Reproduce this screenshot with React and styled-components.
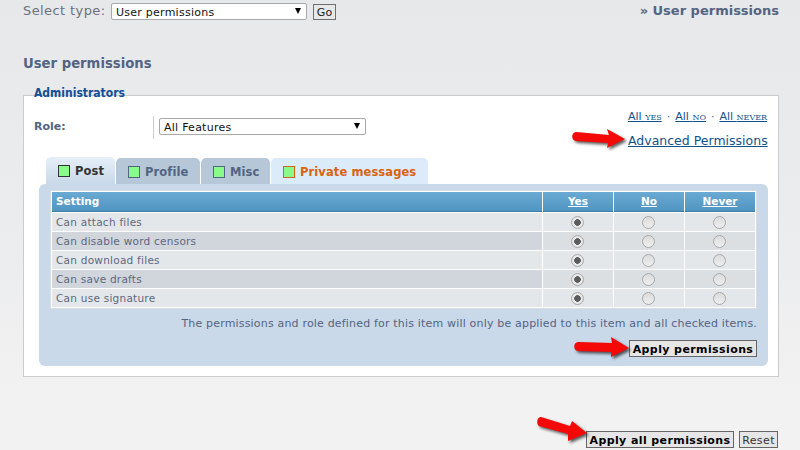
import React from "react";
import styled, { createGlobalStyle } from "styled-components";

const Global = createGlobalStyle`
  html, body { margin: 0; padding: 0; }
  body { font-family: "DejaVu Sans", Verdana, sans-serif; overflow: hidden; }
`;

const Page = styled.div`
  position: relative;
  width: 800px;
  height: 450px;
  overflow: hidden;
  box-sizing: border-box;
  padding: 3px 21px 0 23px;
  background: linear-gradient(#e7e8ea 0, #ecedee 270px, #f2f2f2 400px);
  color: #536482;
`;

const TopBar = styled.div`
  display: flex;
  align-items: flex-start;
  justify-content: space-between;
  height: 44px;
`;

const TypeForm = styled.div`
  display: flex;
  align-items: flex-start;
`;

const TypeLabel = styled.span`
  font-size: 13px;
  line-height: 15px;
  letter-spacing: 0.4px;
  width: 88px;
  color: #6b7280;
`;

const FakeSelect = styled.div`
  box-sizing: border-box;
  width: ${(p) => p.$w}px;
  height: ${(p) => p.$h}px;
  background: #fff;
  border: 1px solid #a9a9a9;
  border-radius: 2px;
  display: flex;
  align-items: center;
  justify-content: space-between;
  padding: 1px 3px 0 4px;
  font-size: 11px;
  letter-spacing: 0.25px;
  color: #111;
`;

const Caret = styled.i`
  width: 0;
  height: 0;
  border-left: 3.5px solid transparent;
  border-right: 3.5px solid transparent;
  border-top: 6px solid #000;
  margin: -2px 2px 0 0;
`;

const GoButton = styled.div`
  box-sizing: border-box;
  margin: 1px 0 0 6px;
  width: 23px;
  height: 16px;
  background: #e8e8e8;
  border: 1px solid #6f6f6f;
  font-size: 11px;
  line-height: 16px;
  text-align: center;
  color: #222;
`;

const Crumb = styled.div`
  font-size: 13px;
  font-weight: bold;
  line-height: 15px;
  color: #536482;
`;

const Heading = styled.h2`
  margin: 0 0 8px;
  height: 33px;
  padding-top: 7px;
  box-sizing: content-box;
  font-family: "DejaVu Sans Condensed", "DejaVu Sans", sans-serif;
  font-size: 14.7px;
  line-height: 17px;
  font-weight: bold;
  color: #536482;
`;

const Fieldset = styled.div`
  position: relative;
  box-sizing: border-box;
  width: 756px;
  height: 282px;
  background: #fff;
  border: 1px solid #ccc;
  padding: 0 10px 0 15px;
`;

const Legend = styled.div`
  position: absolute;
  left: 10px;
  top: -11px;
  font-family: "DejaVu Sans Condensed", "DejaVu Sans", sans-serif;
  font-size: 12px;
  line-height: 16px;
  font-weight: bold;
  color: #115098;
`;

const TopRow = styled.div`
  display: flex;
  justify-content: space-between;
  height: 61px;
`;

const RoleRow = styled.div`
  display: flex;
  align-items: flex-start;
  padding-top: 20px;
  margin-left: -5px;
`;

const RoleLabel = styled.span`
  width: 119px;
  font-size: 11px;
  line-height: 21px;
  font-weight: bold;
  color: #536482;
`;

const RoleDivider = styled.div`
  border-left: 1px solid #ccc;
  height: 21px;
  padding: 2px 0 0 5px;
`;

const LinkBlock = styled.div`
  width: 141px;
  padding-top: 14px;
  margin-right: -1px;
`;

const QuickLinks = styled.div`
  font-size: 11px;
  line-height: 13px;
  height: 23px;
  white-space: nowrap;
  color: #536482;
`;

const Link = styled.a`
  color: #105289;
  text-decoration: underline;
`;

const SmallWord = styled.span`
  font-size: 8px;
  font-family: "DejaVu Serif", serif;
  text-transform: uppercase;
`;

const Sep = styled.span`
  margin: 0 5px;
`;

const BigLink = styled.a`
  display: block;
  font-size: 12.5px;
  line-height: 15px;
  color: #105289;
  text-decoration: underline;
  white-space: nowrap;
`;

const Tabs = styled.div`
  display: flex;
  gap: 1px;
  margin-left: 7px;
  height: 27px;
`;

const Tab = styled.div`
  box-sizing: border-box;
  width: ${(p) => p.$w}px;
  height: ${(p) => (p.$active ? 27 : 26)}px;
  margin-top: ${(p) => (p.$active ? 0 : 1)}px;
  border-radius: 5px 5px 0 0;
  display: flex;
  align-items: center;
  gap: 5px;
  padding: 1px 0 0 12px;
  font-size: 11.5px;
  font-weight: bold;
  letter-spacing: 0.1px;
  background: ${(p) =>
    p.$active ? "linear-gradient(#e6eff8, #c9d9e9)" : p.$alt ? "#dcebfa" : "#b6c8d7"};
  color: ${(p) => (p.$alt ? "#d9640f" : p.$active ? "#333" : "#536482")};
`;

const Swatch = styled.i`
  box-sizing: border-box;
  width: 12px;
  height: 12px;
  background: #88fb88;
  border: 1px solid ${(p) => p.$c};
`;

const Panel = styled.div`
  box-sizing: border-box;
  width: 729px;
  height: 182px;
  background: #c9d9e9;
  border-radius: 6px;
  padding: 6px 11px 0 11px;
`;

const Table = styled.div`
  box-sizing: border-box;
  width: 707px;
  height: 119px;
  background: #fff;
  border: 1px solid #d8dde2;
  padding: 1px;
  display: grid;
  grid-template-columns: 490px 70px 70px 70px;
  column-gap: 1px;
  grid-template-rows: 20px repeat(5, 18px);
  row-gap: 1px;
`;

const HeadCell = styled.div`
  background: linear-gradient(#6aaad4, #5095c0);
  border-bottom: 1px solid #3d7fa9;
  box-sizing: border-box;
  color: #fff;
  font-size: 10.5px;
  font-weight: bold;
  line-height: 19px;
  padding-left: ${(p) => (p.$left ? "4px" : 0)};
  text-align: ${(p) => (p.$left ? "left" : "center")};
  text-decoration: ${(p) => (p.$left ? "none" : "underline")};
`;

const NameCell = styled.div`
  background: ${(p) => (p.$odd ? "#d1d5dc" : "#e4e7ea")};
  font-size: 10.5px;
  letter-spacing: 0.25px;
  line-height: 19px;
  padding-left: 4px;
  color: #5d6880;
`;

const RadioCell = styled.div`
  box-sizing: border-box;
  background: ${(p) => (p.$odd ? "#dcdfe2" : "#e4e7ea")};
  display: flex;
  align-items: center;
  justify-content: center;
  padding-right: 2px;
`;

const Radio = styled.i`
  box-sizing: border-box;
  width: 13px;
  height: 13px;
  border-radius: 50%;
  border: 1px solid #a8a8a8;
  background: ${(p) =>
    p.$on
      ? "radial-gradient(circle, #5c5c5c 0 3px, #e8e8e8 3.6px)"
      : "linear-gradient(#dcdcdc, #eeeeee)"};
`;

const Note = styled.div`
  width: 707px;
  margin-top: 8px;
  height: 23px;
  text-align: right;
  font-size: 11px;
  line-height: 13px;
  letter-spacing: 0.18px;
  white-space: nowrap;
  color: #536482;
`;

const PanelActions = styled.div`
  width: 707px;
  display: flex;
  justify-content: flex-end;
`;

const ActionBtn = styled.div`
  box-sizing: border-box;
  width: ${(p) => p.$w}px;
  height: 17px;
  background: #e6e6e6;
  border: 1px solid #666;
  font-size: 11px;
  line-height: 17px;
  font-weight: ${(p) => (p.$plain ? "normal" : "bold")};
  text-align: center;
  letter-spacing: 0.4px;
  color: ${(p) => (p.$plain ? "#333" : "#000")};
`;

const FootActions = styled.div`
  width: 755px;
  display: flex;
  justify-content: flex-end;
  gap: 5px;
  margin-top: 54px;
`;

const Arrow = styled.svg`
  position: absolute;
  left: ${(p) => p.$x}px;
  top: ${(p) => p.$y}px;
  overflow: visible;
  filter: drop-shadow(2px 2px 1.5px rgba(0, 0, 0, 0.65));
`;

function RedArrow({ x, y, d }) {
  return (
    <Arrow $x={x} $y={y} width="56" height="26" viewBox="0 0 56 26">
      <path d={d} fill="#f40808" />
    </Arrow>
  );
}

const rows = [
  "Can attach files",
  "Can disable word censors",
  "Can download files",
  "Can save drafts",
  "Can use signature",
];

export default function App() {
  return (
    <Page>
      <Global />
      <TopBar>
        <TypeForm>
          <TypeLabel>Select type:</TypeLabel>
          <FakeSelect $w={196} $h={17}>
            User permissions
            <Caret />
          </FakeSelect>
          <GoButton>Go</GoButton>
        </TypeForm>
        <Crumb>» User permissions</Crumb>
      </TopBar>
      <Heading>User permissions</Heading>
      <Fieldset>
        <Legend>Administrators</Legend>
        <TopRow>
          <RoleRow>
            <RoleLabel>Role:</RoleLabel>
            <RoleDivider>
              <FakeSelect $w={207} $h={17}>
                All Features
                <Caret />
              </FakeSelect>
            </RoleDivider>
          </RoleRow>
          <LinkBlock>
            <QuickLinks>
              <Link>
                All <SmallWord>yes</SmallWord>
              </Link>
              <Sep>·</Sep>
              <Link>
                All <SmallWord>no</SmallWord>
              </Link>
              <Sep>·</Sep>
              <Link>
                All <SmallWord>never</SmallWord>
              </Link>
            </QuickLinks>
            <BigLink>Advanced Permissions</BigLink>
          </LinkBlock>
        </TopRow>
        <Tabs>
          <Tab $w={69} $active>
            <Swatch $c="#333" />
            Post
          </Tab>
          <Tab $w={84}>
            <Swatch $c="#536482" />
            Profile
          </Tab>
          <Tab $w={69}>
            <Swatch $c="#536482" />
            Misc
          </Tab>
          <Tab $w={157} $alt>
            <Swatch $c="#d9640f" />
            Private messages
          </Tab>
        </Tabs>
        <Panel>
          <Table>
            <HeadCell $left>Setting</HeadCell>
            <HeadCell>Yes</HeadCell>
            <HeadCell>No</HeadCell>
            <HeadCell>Never</HeadCell>
            {rows.map((r, i) => (
              <React.Fragment key={r}>
                <NameCell $odd={i % 2 === 1}>{r}</NameCell>
                <RadioCell $odd={i % 2 === 1}>
                  <Radio $on />
                </RadioCell>
                <RadioCell $odd={i % 2 === 1}>
                  <Radio />
                </RadioCell>
                <RadioCell $odd={i % 2 === 1}>
                  <Radio />
                </RadioCell>
              </React.Fragment>
            ))}
          </Table>
          <Note>
            The permissions and role defined for this item will only be applied to this item and
            all checked items.
          </Note>
          <PanelActions>
            <ActionBtn $w={128}>Apply permissions</ActionBtn>
          </PanelActions>
        </Panel>
      </Fieldset>
      <FootActions>
        <ActionBtn $w={148}>Apply all permissions</ActionBtn>
        <ActionBtn $w={39} $plain>
          Reset
        </ActionBtn>
      </FootActions>
      <RedArrow x={572} y={128} d="M4 4 L37 7 L35 1 L53 11 L35 20 L36 15 L4 13 C-1 13 -1 4 4 4 Z" />
      <RedArrow x={574} y={336} d="M4 6 L38 7 L37 1 L55 12 L37 21 L37 16 L4 15 C-1 15 -1 6 4 6 Z" />
      <RedArrow x={537} y={416} d="M4 1 L33 10 L35 5 L50 17 L31 25 L31 18 L2 10 C-1 8 0 1 4 1 Z" />
    </Page>
  );
}
